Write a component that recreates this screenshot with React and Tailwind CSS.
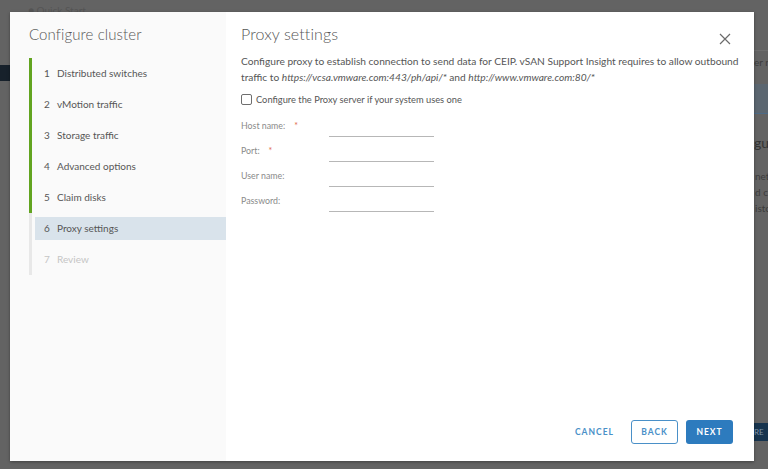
import React from 'react'

const steps = [
  { n: 1, label: 'Distributed switches', done: true },
  { n: 2, label: 'vMotion traffic', done: true },
  { n: 3, label: 'Storage traffic', done: true },
  { n: 4, label: 'Advanced options', done: true },
  { n: 5, label: 'Claim disks', done: true },
  { n: 6, label: 'Proxy settings', active: true },
  { n: 7, label: 'Review', disabled: true },
]

const fields = [
  { label: 'Host name:', required: true },
  { label: 'Port:', required: true },
  { label: 'User name:' },
  { label: 'Password:' },
]

function Step({ step }) {
  const border = step.done ? 'border-[#62a420]' : 'border-[#e8e8e8]'
  const color = step.disabled ? 'text-[#c5c5c5]' : 'text-[#565656]'
  return (
    <div className={`border-l-[3px] ${border} pl-[3px] py-[4px]`}>
      <div className={`h-[23px] flex items-center pl-[9px] text-[10px] ${color} ${step.active ? 'bg-[#d9e3eb]' : ''}`}>
        <span className="w-[13px]">{step.n}</span>
        <span>{step.label}</span>
      </div>
    </div>
  )
}

export default function App() {
  return (
    <div className="relative w-[768px] h-[469px] overflow-hidden bg-[#636363]" style={{ fontFamily: 'Lato, "Liberation Sans", sans-serif' }}>
      {/* dimmed page behind */}
      <div className="absolute left-0 top-[65px] w-[10px] h-[16px] bg-[#17212b]" />
      <div className="absolute left-[28px] top-[3px] text-[10px] text-[#555]">● Quick Start</div>
      <div className="absolute left-[754px] top-[50px] w-[14px] h-[120px] flex flex-col text-[#3c3c3c] overflow-hidden whitespace-nowrap">
        <div className="h-px bg-[#6e6e6e]" />
        <div className="mt-[4px] text-[10px]">er n</div>
        <div className="mt-[14px] h-[30px] bg-[#5b6670] border-b border-[#4c6a86]" />
        <div className="mt-[18px] text-[14px] text-[#333]">gur</div>
      </div>
      <div className="absolute left-[755px] top-[168px] w-[13px] overflow-hidden text-[10px] leading-[16px] text-[#3c3c3c] whitespace-nowrap">
        <div>net</div>
        <div>d cu</div>
        <div>isto</div>
      </div>
      <div className="absolute right-0 top-[423px] w-[14px] h-[18px] bg-[#17344e] text-[8px] text-[#7f95aa] leading-[18px] overflow-hidden">RE</div>

      {/* modal */}
      <div className="absolute left-[10px] top-[12px] w-[744px] h-[449px] flex bg-white shadow-[0_1px_3px_rgba(0,0,0,0.35)]">
        <div className="w-[216px] bg-[#fafafa] pt-[12px] pl-[19px]">
          <h2 className="text-[15px] text-[#565656] font-light tracking-[0.1px] leading-[20px]">Configure cluster</h2>
          <div className="mt-[14px] flex flex-col">
            {steps.map(s => <Step key={s.n} step={s} />)}
          </div>
        </div>

        <div className="flex-1 flex flex-col pl-[15px] pr-[21px]">
          <div className="flex items-start justify-between pt-[12px]">
            <h1 className="text-[16px] text-[#565656] font-light tracking-[0.1px] leading-[20px]">Proxy settings</h1>
            <button className="mt-[9px] mr-[2px] text-[#6b6b6b]" aria-label="Close">
              <svg width="12" height="12" viewBox="0 0 12 12" fill="none" stroke="currentColor" strokeWidth="1.2">
                <path d="M1 1 L11 11 M11 1 L1 11" />
              </svg>
            </button>
          </div>

          <p className="mt-[9px] -mr-[10px] text-[10.2px] leading-[15.5px] text-[#565656]">
            Configure proxy to establish connection to send data for CEIP. vSAN Support Insight requires to allow outbound traffic to <i>https://vcsa.vmware.com:443/ph/api/*</i> and <i>http://www.vmware.com:80/*</i>
          </p>

          <label className="mt-[8px] flex items-center gap-[4px] text-[9.3px] text-[#565656]">
            <span className="w-[11px] h-[11px] rounded-[2px] border border-[#6e6e6e] bg-white" />
            Configure the Proxy server if your system uses one
          </label>

          <div className="mt-[6px] flex flex-col">
            {fields.map(f => (
              <div key={f.label} className="h-[25px] flex items-center">
                <div className="w-[88px] text-[8.8px] text-[#8a8a8a]">
                  {f.label}
                  {f.required && <span className="ml-[9px] text-[#e06a4a]">*</span>}
                </div>
                <div className="w-[105px] h-[19px] border-b border-[#b7b7b7] mt-[4px]" />
              </div>
            ))}
          </div>

          <div className="mt-auto mb-[17px] flex items-center justify-end gap-[8px]">
            <button className="h-[23px] px-[9px] text-[8.5px] font-bold tracking-[1px] text-[#4a90c8]">CANCEL</button>
            <button className="w-[47px] h-[24px] border border-[#4a90c8] rounded-[3px] text-[8.5px] font-bold tracking-[1px] text-[#4a90c8]">BACK</button>
            <button className="w-[47px] h-[24px] bg-[#2d7bbe] rounded-[3px] text-[8.5px] font-bold tracking-[1px] text-white">NEXT</button>
          </div>
        </div>
      </div>
    </div>
  )
}
